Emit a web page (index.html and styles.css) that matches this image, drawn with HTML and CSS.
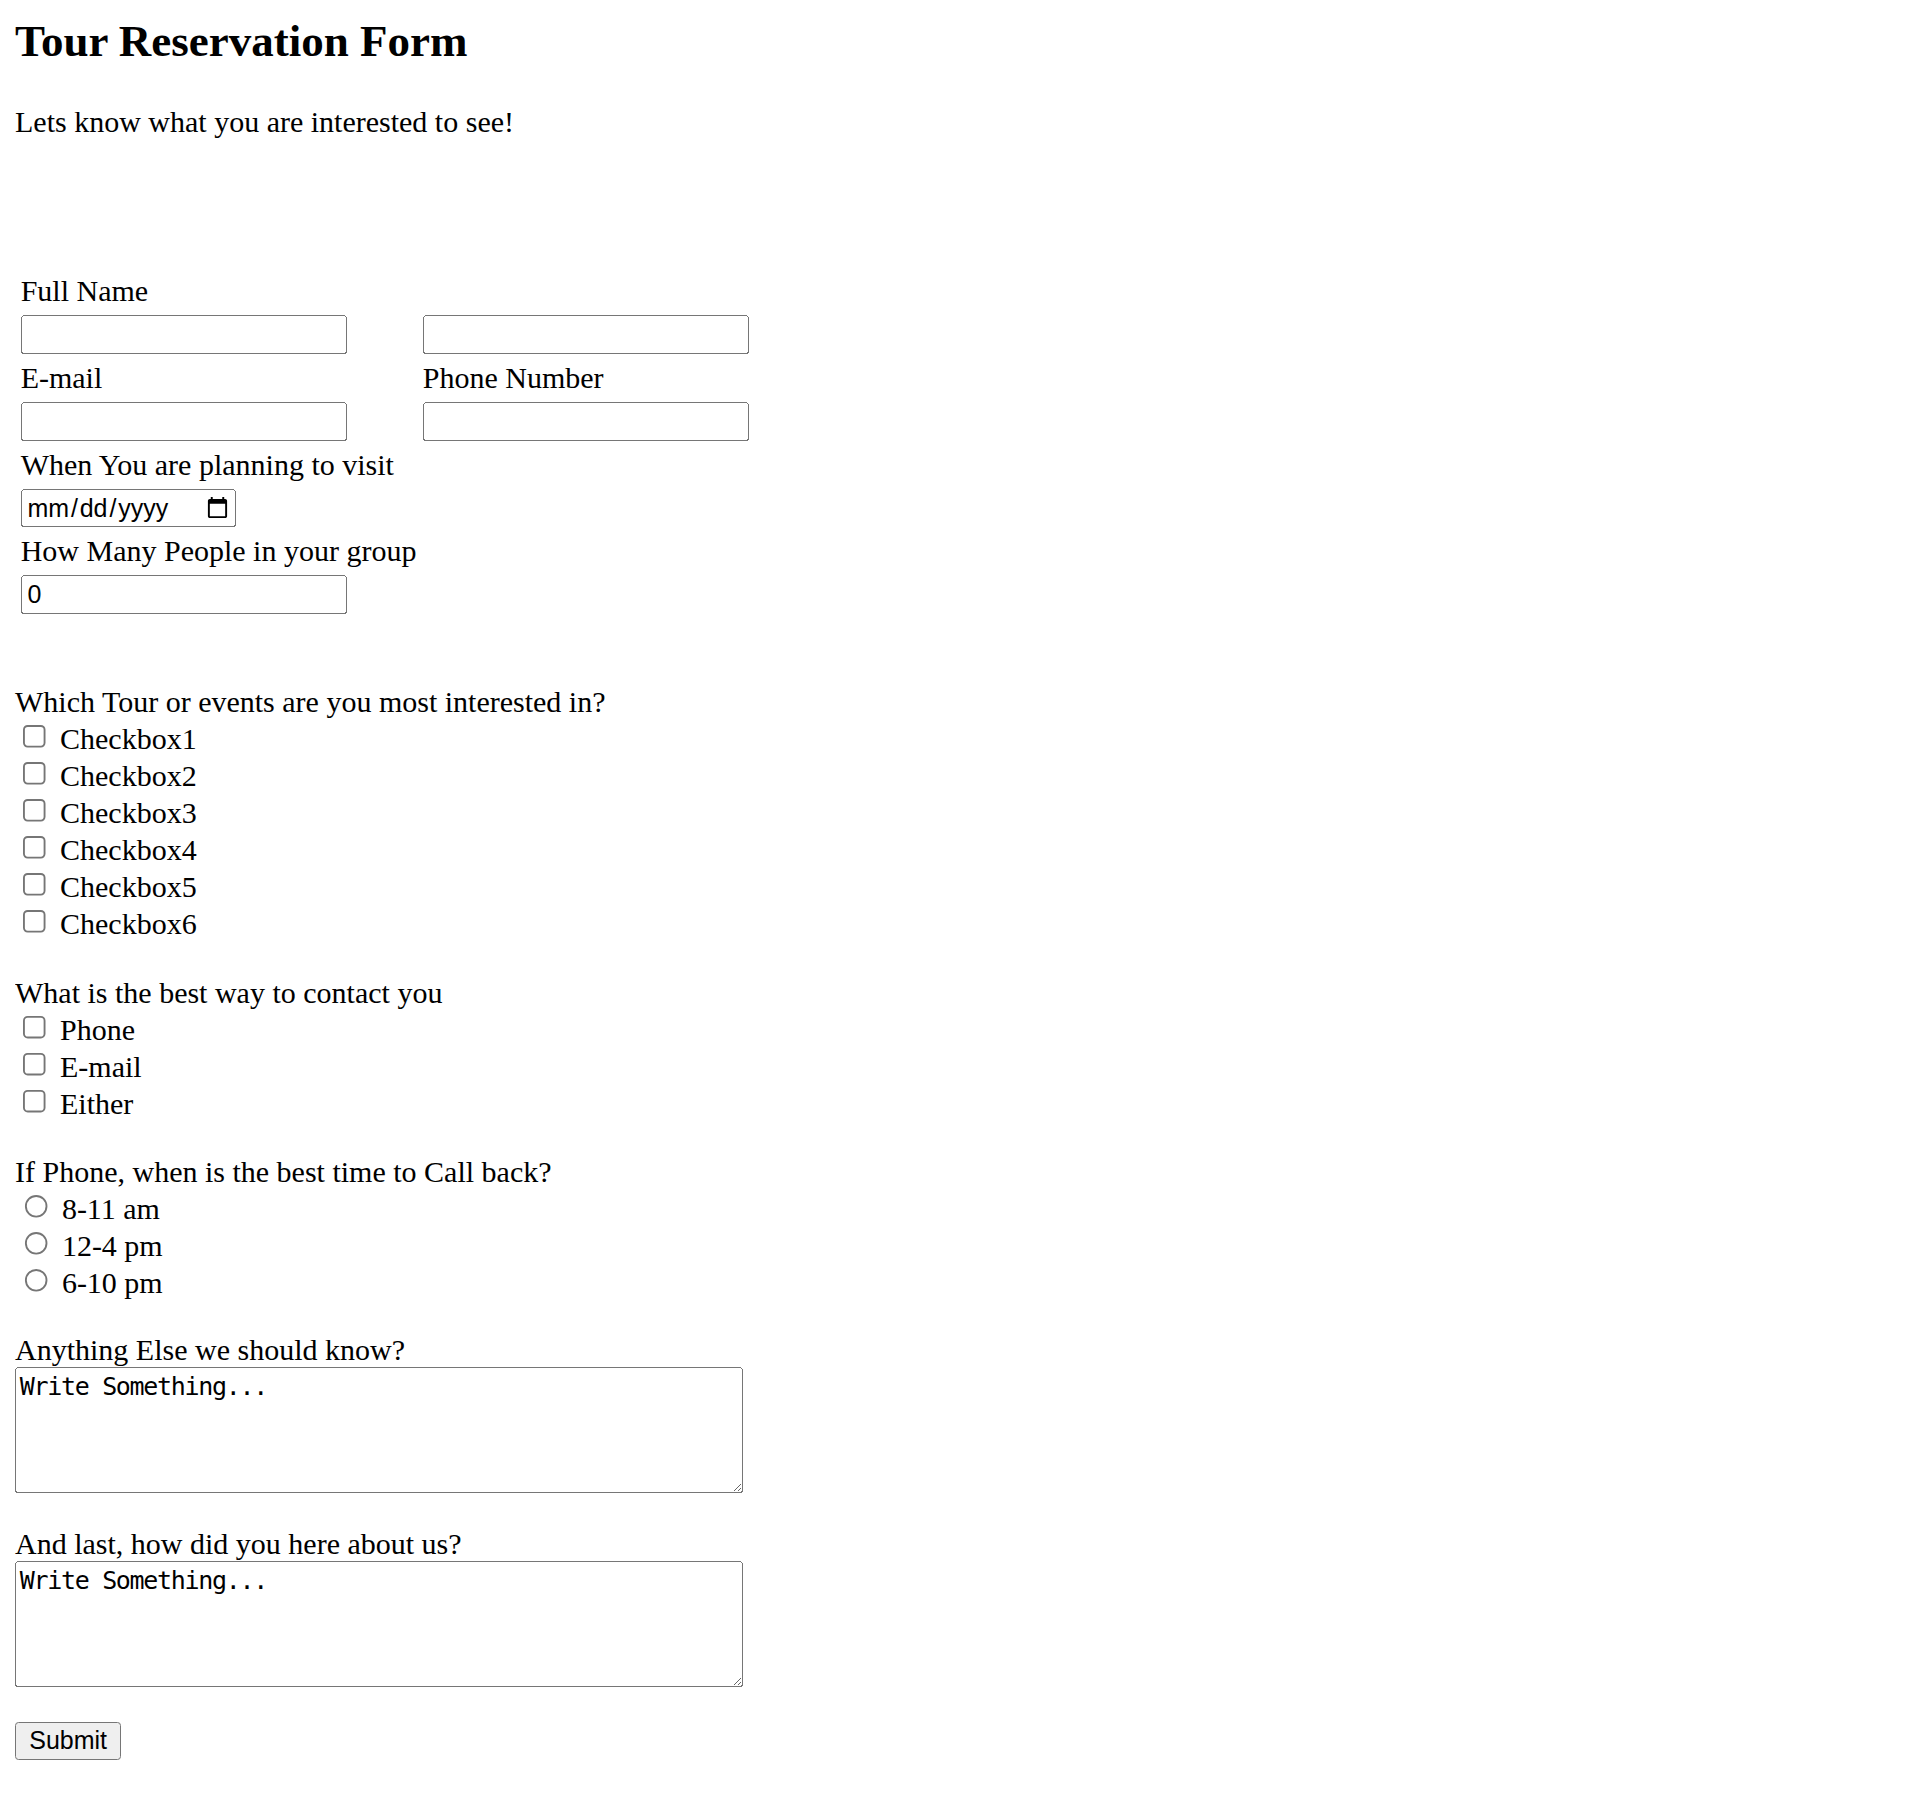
FILE: index.html
```html
<!DOCTYPE html>
<html lang="en">
<head>
<meta charset="utf-8">
<title>Tour Reservation Form</title>
<link rel="stylesheet" href="styles.css">
</head>
<body class="page">
  <header class="intro">
    <h1 class="title">Tour Reservation Form</h1>
    <p class="lead">Lets know what you are interested to see!</p>
  </header>

  <form class="form">
    <div class="fields">
      <label class="cell" for="first-name">Full Name</label>
      <span class="cell"></span>
      <div class="cell"><input id="first-name" class="text-input" type="text"></div>
      <div class="cell"><input class="text-input" type="text" aria-label="Last name"></div>

      <label class="cell" for="email">E-mail</label>
      <label class="cell" for="phone">Phone Number</label>
      <div class="cell"><input id="email" class="text-input" type="email"></div>
      <div class="cell"><input id="phone" class="text-input" type="tel"></div>

      <label class="cell" for="visit">When You are planning to visit</label>
      <span class="cell"></span>
      <div class="cell"><input id="visit" class="text-input date-input" type="date"></div>
      <span class="cell"></span>

      <label class="cell" for="people">How Many People in your group</label>
      <span class="cell"></span>
      <div class="cell"><input id="people" class="text-input" type="number" value="0"></div>
      <span class="cell"></span>
    </div>

    <div class="group group-first">
      <p class="group-title">Which Tour or events are you most interested in?</p>
      <label class="option"><input type="checkbox" name="tour"> Checkbox1</label>
      <label class="option"><input type="checkbox" name="tour"> Checkbox2</label>
      <label class="option"><input type="checkbox" name="tour"> Checkbox3</label>
      <label class="option"><input type="checkbox" name="tour"> Checkbox4</label>
      <label class="option"><input type="checkbox" name="tour"> Checkbox5</label>
      <label class="option"><input type="checkbox" name="tour"> Checkbox6</label>
    </div>

    <div class="group">
      <p class="group-title">What is the best way to contact you</p>
      <label class="option"><input type="checkbox" name="contact"> Phone</label>
      <label class="option"><input type="checkbox" name="contact"> E-mail</label>
      <label class="option"><input type="checkbox" name="contact"> Either</label>
    </div>

    <div class="group">
      <p class="group-title">If Phone, when is the best time to Call back?</p>
      <label class="option"><input type="radio" name="time"> 8-11 am</label>
      <label class="option"><input type="radio" name="time"> 12-4 pm</label>
      <label class="option"><input type="radio" name="time"> 6-10 pm</label>
    </div>

    <div class="group group-notes">
      <label class="group-title" for="notes">Anything Else we should know?</label>
      <textarea id="notes" class="note">Write Something...</textarea>
    </div>

    <div class="group">
      <label class="group-title" for="source">And last, how did you here about us?</label>
      <textarea id="source" class="note">Write Something...</textarea>
    </div>

    <div class="actions">
      <button class="submit" type="submit">Submit</button>
    </div>
  </form>
</body>
</html>
```

FILE: styles.css
```css
html {
  background: #ffffff;
}

.page {
  zoom: 1.875;
  margin: 8px;
  font-family: "Liberation Serif", "Times New Roman", serif;
  font-size: 16px;
  color: #000000;
  background: #ffffff;
}

.title {
  font-size: 24px;
  font-weight: bold;
  margin: 0 0 20px;
}

.lead {
  margin: 0;
}

.form {
  margin: 0 0 16px;
}

.fields {
  display: grid;
  grid-template-columns: max-content max-content;
  column-gap: 1.4px;
  row-gap: 1.7px;
  padding: 2px;
  margin-top: 69.5px;
  width: max-content;
}

.cell {
  display: block;
  padding: 1px;
}

.text-input {
  display: block;
  box-sizing: border-box;
  width: 174px;
  margin: 0;
  font: 13.333px "Liberation Sans", Arial, sans-serif;
}

.date-input {
  width: 115px;
}

.group {
  margin-top: 18.35px;
}

.group-first {
  margin-top: 35.05px;
}

.group-notes {
  margin-top: 17.7px;
}

.group-title {
  display: block;
  margin: 0;
}

.option {
  display: block;
}

.note {
  display: block;
  box-sizing: border-box;
  width: 388.5px;
  height: 67px;
  margin: 0;
  font: 13.333px "DejaVu Sans Mono", "Liberation Mono", monospace;
  letter-spacing: -0.7px;
  color: #000000;
}

.actions {
  margin-top: 18.45px;
}

.submit {
  font: 13.333px "Liberation Sans", Arial, sans-serif;
  margin: 0;
}
```
